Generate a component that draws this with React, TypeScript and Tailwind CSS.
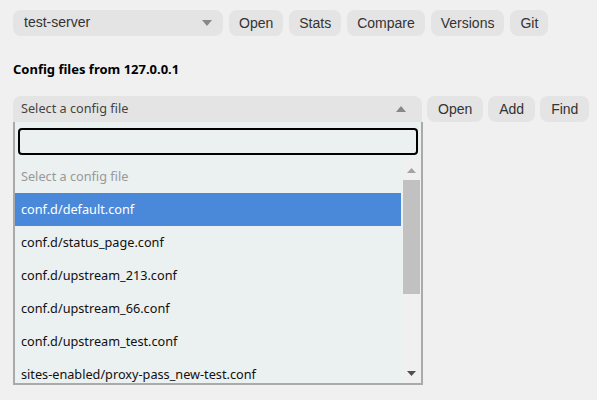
const files = [
  "conf.d/default.conf",
  "conf.d/status_page.conf",
  "conf.d/upstream_213.conf",
  "conf.d/upstream_66.conf",
  "conf.d/upstream_test.conf",
  "sites-enabled/proxy-pass_new-test.conf",
];

function Btn({ label, wide }: { label: string; wide?: boolean }) {
  return (
    <button
      className={
        wide
          ? "h-[26px] shrink-0 rounded-lg bg-[#e4e4e4] px-[11px] text-[14px] text-[#333]"
          : "h-[26px] shrink-0 rounded-lg bg-[#e4e4e4] px-[10px] text-[14px] text-[#333]"
      }
    >
      {label}
    </button>
  );
}

function Caret({ up }: { up?: boolean }) {
  return (
    <svg width="10" height="6" viewBox="0 0 10 6" className="shrink-0">
      <path d={up ? "M0 6 L5 0 L10 6 Z" : "M0 0 L5 6 L10 0 Z"} fill="#888" />
    </svg>
  );
}

export default function App() {
  return (
    <div className="min-h-[400px] overflow-hidden bg-[#f0f0f0] px-[13px] pt-[10px] font-['Liberation_Sans',Arial,sans-serif]">
      <div className="flex gap-[6px]">
        <div className="flex h-[26px] w-[210px] shrink-0 items-center justify-between rounded-lg bg-[#e4e4e4] pl-[11px] pr-[11px] text-[14px] text-[#333]">
          <span className="-mt-[2px]">test-server</span>
          <Caret />
        </div>
        <Btn label="Open" />
        <Btn label="Stats" />
        <Btn label="Compare" />
        <Btn label="Versions" />
        <Btn label="Git" />
      </div>

      <h2 className="mt-[24px] font-['Noto_Sans',sans-serif] text-[13px] font-bold leading-[18px] text-black">
        Config files from 127.0.0.1
      </h2>

      <div className="mt-[18px] flex gap-[5px]">
        <div className="relative w-[409px] shrink-0">
          <div className="flex h-[26px] items-center justify-between rounded-t-lg bg-[#e4e4e4] pl-[8px] pr-[16px] font-['Noto_Sans',sans-serif] text-[12.7px] text-[#444]">
            <span>Select a config file</span>
            <Caret up />
          </div>
          <div className="absolute left-0 top-[26px] z-10 w-[410px] border-x-2 border-b-2 border-[#aaa] bg-[#ebf0f0] font-['Noto_Sans',sans-serif] text-[12.7px]">
            <div className="px-[3px] pb-[5px] pt-[6px]">
              <div className="h-[27px] rounded-[4px] border-2 border-black bg-[#ebf0f0]" />
            </div>
            <div className="flex h-[223px]">
              <ul className="flex-1 overflow-hidden">
                <li className="flex h-[33px] items-center px-[6px] text-[#999]">Select a config file</li>
                {files.map((f, i) => (
                  <li
                    key={f}
                    className={
                      i === 0
                        ? "flex h-[33px] items-center bg-[#4a89d9] px-[6px] text-white"
                        : "flex h-[33px] items-center px-[6px] text-[#111]"
                    }
                  >
                    {f}
                  </li>
                ))}
              </ul>
              <div className="flex w-[20px] flex-col items-center bg-[#f0f0f0]">
                <div className="flex h-[20px] items-center justify-center">
                  <svg width="9" height="5" viewBox="0 0 9 5">
                    <path d="M0 5 L4.5 0 L9 5 Z" fill="#a3a3a3" />
                  </svg>
                </div>
                <div className="h-[114px] w-[17px] bg-[#c1c1c1]" />
                <div className="flex-1" />
                <div className="flex h-[20px] items-center justify-center">
                  <svg width="9" height="5" viewBox="0 0 9 5">
                    <path d="M0 0 L4.5 5 L9 0 Z" fill="#505050" />
                  </svg>
                </div>
              </div>
            </div>
          </div>
        </div>
        <Btn label="Open" wide />
        <Btn label="Add" wide />
        <Btn label="Find" wide />
      </div>
    </div>
  );
}
